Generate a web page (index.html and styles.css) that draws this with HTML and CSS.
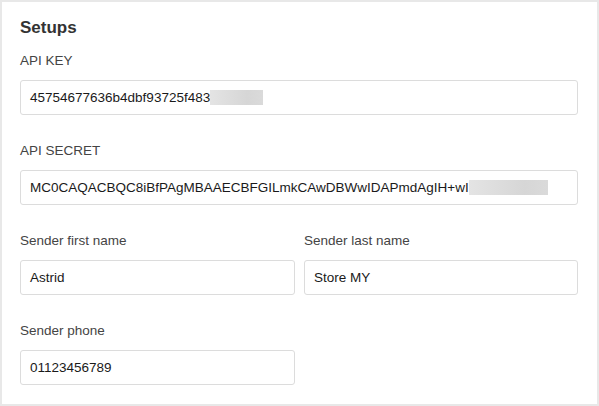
FILE: index.html
```html
<!DOCTYPE html>
<html>
<head>
<meta charset="utf-8">
<link rel="stylesheet" href="styles.css">
</head>
<body>
<div class="card">
  <h2 class="title">Setups</h2>
  <div class="group">
    <div class="label">API KEY</div>
    <div class="field">45754677636b4dbf93725f483<span class="redact redact-key"></span></div>
  </div>
  <div class="group">
    <div class="label">API SECRET</div>
    <div class="field">MC0CAQACBQC8iBfPAgMBAAECBFGILmkCAwDBWwIDAPmdAgIH+wI<span class="redact redact-secret"></span></div>
  </div>
  <div class="row">
    <div class="group">
      <div class="label">Sender first name</div>
      <div class="field">Astrid</div>
    </div>
    <div class="group">
      <div class="label">Sender last name</div>
      <div class="field">Store MY</div>
    </div>
    <div class="group">
      <div class="label">Sender phone</div>
      <div class="field">01123456789</div>
    </div>
  </div>
</div>
</body>
</html>
```
FILE: styles.css
```css
html, body {
  margin: 0;
  padding: 0;
}
body {
  background: #e8e8e8;
  padding: 2px;
  width: 599px;
  height: 406px;
  box-sizing: border-box;
  font-family: "Liberation Sans", Arial, sans-serif;
}
.card {
  background: #fff;
  height: 402px;
  box-sizing: border-box;
  padding: 16px 19px 0 18px;
}
.title {
  margin: 0 0 15px 0;
  font-size: 17px;
  line-height: 20px;
  font-weight: bold;
  color: #333;
}
.group {
  margin-bottom: 28px;
}
.label {
  font-size: 13.5px;
  line-height: 16px;
  color: #444;
  margin-bottom: 11px;
}
.field {
  height: 35px;
  box-sizing: border-box;
  border: 1px solid #dcdcdc;
  border-radius: 3px;
  padding: 0 9px;
  display: flex;
  align-items: center;
  font-size: 13.5px;
  color: #1a1a1a;
  white-space: nowrap;
  overflow: hidden;
}
.redact {
  display: inline-block;
  height: 15px;
  background: linear-gradient(to right, #e4e4e4, #d6d6d6 70%, #dadada);
}
.redact-key {
  width: 53px;
}
.redact-secret {
  width: 79px;
}
.row {
  display: grid;
  grid-template-columns: 275px 274px;
  column-gap: 9px;
}
```
